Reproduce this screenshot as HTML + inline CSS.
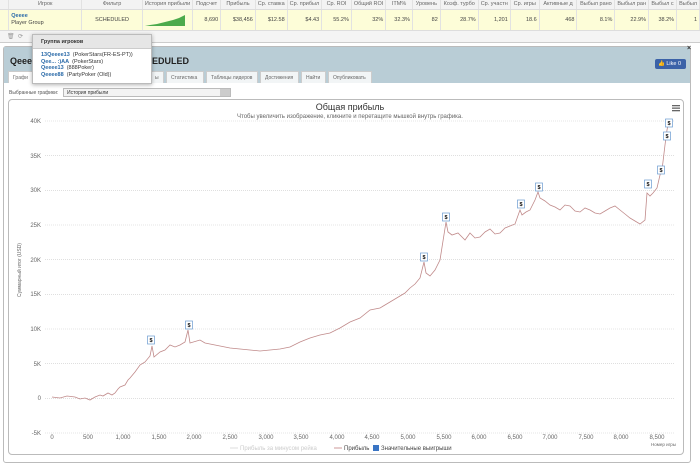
<!DOCTYPE html>
<html><head><meta charset="utf-8"><style>
*{margin:0;padding:0;box-sizing:border-box}
body{width:700px;height:463px;overflow:hidden;background:#fff;font-family:"Liberation Sans","Noto Sans CJK SC",sans-serif;position:relative;font-size:6px;color:#333}
.abs{position:absolute}
table{border-collapse:collapse;position:absolute;left:0;top:0;width:700px}
td{font-size:5.5px;white-space:nowrap;overflow:hidden;border-right:1px solid #e2e2e2;padding:0 2px}
.h td{height:9px;background:#f3f3f3;color:#666;text-align:center;border-bottom:1px solid #ddd}
.r td{height:21px;background:#fdfdd8;text-align:right;color:#444;border-bottom:1px solid #ddd}
.tab{position:absolute;top:71px;height:12px;border:1px solid #ccc;border-bottom:none;background:#f2f5f6;font-size:5px;color:#666;padding:3px 4px 0}
</style></head><body>
<table>
<tr class="h"><td style="width:9px"></td><td style="width:75px">Игрок</td><td style="width:62px">Фильтр</td><td style="width:45px">История прибыли</td><td style="width:28px">Подсчет</td><td style="width:35px">Прибыль</td><td style="width:31px">Ср. ставка</td><td style="width:32px">Ср. прибыл</td><td style="width:30px">Ср. ROI</td><td style="width:31px">Общий ROI</td><td style="width:27px">ITM%</td><td style="width:28px">Уровень</td><td style="width:38px">Коэф. турбо</td><td style="width:31px">Ср. участн</td><td style="width:29px">Ср. игры</td><td style="width:38px">Активные д</td><td style="width:38px">Выбыл рано</td><td style="width:32px">Выбыл ран</td><td style="width:28px">Выбыл с</td><td>Выбыл</td></tr>
<tr class="r"><td></td><td style="text-align:left;line-height:7px"><b style="color:#2a6aa8">Qeeee</b><br>Player Group</td><td style="text-align:center">SCHEDULED</td><td><svg width="40" height="12" style="display:block"><path d="M0 12 L5 11 L12 10 L20 8 L28 6 L34 4 L40 1 L40 12Z" fill="#4caa4c"/></svg></td><td>8,690</td><td>$38,456</td><td>$12.58</td><td>$4.43</td><td>55.2%</td><td>32%</td><td>32.3%</td><td>82</td><td>28.7%</td><td>1,201</td><td>18.6</td><td>468</td><td>8.1%</td><td>22.9%</td><td>38.2%</td><td>1</td></tr>
</table>
<div class="abs" style="left:0;top:31px;width:700px;height:12px;background:#f4f4f4;border-bottom:1px solid #ccc;font-size:6px;color:#999;padding:2px 0 0 7px">🗑 &nbsp;⟳ <span style="margin-left:112px">ы ▾</span></div>
<div class="abs" style="left:3px;top:46px;width:688px;height:417px;border:1px solid #bbb;background:#fff;border-radius:3px"></div>
<div class="abs" style="left:4px;top:47px;width:686px;height:36px;background:#b9cdd6"></div>
<div class="abs" style="left:10px;top:56px;font-size:9px;font-weight:bold;color:#222">Qeeee<span style="margin-left:115px">EDULED</span></div>
<div class="abs" style="left:655px;top:59px;width:31px;height:10px;background:#3b62a8;border-radius:2px;color:#fff;font-size:5.5px;padding:2px 3px">👍 Like 0</div>
<div class="abs" style="left:687px;top:45px;font-size:7px;font-weight:bold">×</div>
<div class="tab" style="left:8px;width:28px;background:#fff">Графи</div>
<div class="tab" style="left:150px;width:14px">ы</div>
<div class="tab" style="left:166px;width:38px">Статистика</div>
<div class="tab" style="left:206px;width:52px">Таблицы лидеров</div>
<div class="tab" style="left:260px;width:39px">Достижения</div>
<div class="tab" style="left:301px;width:25px">Найти</div>
<div class="tab" style="left:328px;width:44px">Опубликовать</div>
<div class="abs" style="left:9px;top:90px;font-size:5px;color:#555">Выбранные графики:</div>
<div class="abs" style="left:63px;top:88px;width:168px;height:9px;border:1px solid #bbb;background:#f3f3f3;font-size:5px;padding:1px 3px">История прибыли<span style="position:absolute;right:0;top:0;width:10px;height:7px;background:#ccc"></span></div>
<div class="abs" style="left:8px;top:99px;width:676px;height:356px;border:1px solid #bbb;border-radius:4px"></div>
<div class="abs" style="left:32px;top:34px;width:120px;height:50px;background:#fff;border:1px solid #bbb;box-shadow:0 1px 4px rgba(0,0,0,.3)">
<div style="height:14px;background:#e6e6e6;font-size:5.5px;font-weight:bold;padding:4px 8px;border-bottom:1px solid #ccc">Группа игроков</div>
<div style="font-size:5.5px;line-height:6.5px;padding:3px 8px;color:#333"><b style="color:#2a6aa8">13Qeeee13</b> &nbsp;(PokerStars(FR-ES-PT))<br><b style="color:#2a6aa8">Qee... :)AA</b> &nbsp;(PokerStars)<br><b style="color:#2a6aa8">Qeeee13</b> &nbsp;(888Poker)<br><b style="color:#2a6aa8">Qeeee88</b> &nbsp;(PartyPoker (Old))</div></div>
<svg class="abs" style="left:0;top:0" width="700" height="463" font-family="Liberation Sans,sans-serif">
<text x="350" y="110" font-size="9" fill="#333" text-anchor="middle">Общая прибыль</text>
<text x="350" y="118" font-size="6" fill="#666" text-anchor="middle">Чтобы увеличить изображение, кликните и перетащите мышкой внутрь графика.</text>
<g fill="#666"><rect x="672" y="105" width="8" height="1.3"/><rect x="672" y="107.5" width="8" height="1.3"/><rect x="672" y="110" width="8" height="1.3"/></g>
<g stroke="#ccc" stroke-dasharray="1,1" stroke-width="0.6">
<line x1="45" x2="675" y1="121" y2="121"/><line x1="45" x2="675" y1="155.7" y2="155.7"/><line x1="45" x2="675" y1="190.3" y2="190.3"/><line x1="45" x2="675" y1="225" y2="225"/><line x1="45" x2="675" y1="259.7" y2="259.7"/><line x1="45" x2="675" y1="294.3" y2="294.3"/><line x1="45" x2="675" y1="329" y2="329"/><line x1="45" x2="675" y1="363.7" y2="363.7"/><line x1="45" x2="675" y1="398.3" y2="398.3"/><line x1="45" x2="675" y1="433" y2="433"/></g>
<g font-size="6" fill="#666" text-anchor="end">
<text x="41" y="123">40K</text><text x="41" y="158">35K</text><text x="41" y="192">30K</text><text x="41" y="227">25K</text><text x="41" y="262">20K</text><text x="41" y="296">15K</text><text x="41" y="331">10K</text><text x="41" y="366">5K</text><text x="41" y="400">0</text><text x="41" y="435">-5K</text></g>
<text x="21" y="270" font-size="5" fill="#666" transform="rotate(-90 21 270)" text-anchor="middle">Суммарный итог (USD)</text>
<g font-size="6" fill="#666" text-anchor="middle">
<text x="52" y="439">0</text><text x="88" y="439">500</text><text x="123" y="439">1,000</text><text x="159" y="439">1,500</text><text x="194" y="439">2,000</text><text x="230" y="439">2,500</text><text x="266" y="439">3,000</text><text x="301" y="439">3,500</text><text x="337" y="439">4,000</text><text x="372" y="439">4,500</text><text x="408" y="439">5,000</text><text x="444" y="439">5,500</text><text x="479" y="439">6,000</text><text x="515" y="439">6,500</text><text x="550" y="439">7,000</text><text x="586" y="439">7,500</text><text x="621" y="439">8,000</text><text x="657" y="439">8,500</text></g>
<text x="676" y="446" font-size="4.5" fill="#666" text-anchor="end">Номер игры</text>
<g font-size="6"><line x1="230" x2="238" y1="448" y2="448" stroke="#ddd"/><text x="240" y="450" fill="#ccc">Прибыль за минусом рейка</text>
<line x1="334" x2="342" y1="448" y2="448" stroke="#c99"/><text x="344" y="450" fill="#444">Прибыль</text>
<rect x="373" y="445" width="6" height="6" fill="#3a75c4"/><text x="381" y="450" fill="#444">Значительные выигрыши</text></g>
<polyline fill="none" stroke="#c08a8a" stroke-width="0.8" points="52,397 60,398 67,396 75,397 80,399 85,398 90,400 95,397 100,395 103,396 108,393 112,395 115,393 118,389 120,387 125,385 128,380 130,378 135,372 140,365 145,362 150,356 152,346 154,357 160,352 165,350 170,345 175,347 180,345 185,342 188,330 190,343 200,340 205,343 210,344 220,346 230,348 240,349 250,350 260,351 270,350 280,349 290,347 300,342 310,338 320,335 330,333 340,328 350,322 360,318 370,310 380,308 390,302 400,296 405,293 410,288 415,284 420,278 424,262 426,273 430,276 435,270 440,260 446,222 448,232 452,235 458,233 465,240 470,233 475,238 480,237 485,232 490,229 495,234 500,233 505,228 510,226 515,224 520,210 522,215 526,212 530,210 535,200 538,192 540,198 545,201 550,205 555,207 560,210 565,205 570,206 575,211 580,212 585,208 590,210 595,213 600,214 605,211 610,208 615,206 620,210 625,214 630,218 635,221 640,224 645,220 647,193 650,196 653,193 657,188 660,175 662,170 665,145 667,130 668,125"/>
<g font-size="5.5" font-weight="bold" text-anchor="middle" fill="#111">
<g transform="translate(151,345)"><rect x="-3.5" y="-9" width="7" height="8" fill="#fff" stroke="#6a9ad0" stroke-width="0.7"/><text y="-3">$</text></g>
<g transform="translate(189,330)"><rect x="-3.5" y="-9" width="7" height="8" fill="#fff" stroke="#6a9ad0" stroke-width="0.7"/><text y="-3">$</text></g>
<g transform="translate(424,262)"><rect x="-3.5" y="-9" width="7" height="8" fill="#fff" stroke="#6a9ad0" stroke-width="0.7"/><text y="-3">$</text></g>
<g transform="translate(446,222)"><rect x="-3.5" y="-9" width="7" height="8" fill="#fff" stroke="#6a9ad0" stroke-width="0.7"/><text y="-3">$</text></g>
<g transform="translate(521,209)"><rect x="-3.5" y="-9" width="7" height="8" fill="#fff" stroke="#6a9ad0" stroke-width="0.7"/><text y="-3">$</text></g>
<g transform="translate(539,192)"><rect x="-3.5" y="-9" width="7" height="8" fill="#fff" stroke="#6a9ad0" stroke-width="0.7"/><text y="-3">$</text></g>
<g transform="translate(648,189)"><rect x="-3.5" y="-9" width="7" height="8" fill="#fff" stroke="#6a9ad0" stroke-width="0.7"/><text y="-3">$</text></g>
<g transform="translate(661,175)"><rect x="-3.5" y="-9" width="7" height="8" fill="#fff" stroke="#6a9ad0" stroke-width="0.7"/><text y="-3">$</text></g>
<g transform="translate(667,141)"><rect x="-3.5" y="-9" width="7" height="8" fill="#fff" stroke="#6a9ad0" stroke-width="0.7"/><text y="-3">$</text></g>
<g transform="translate(669,128)"><rect x="-3.5" y="-9" width="7" height="8" fill="#fff" stroke="#6a9ad0" stroke-width="0.7"/><text y="-3">$</text></g>
</g>
</svg>
</body></html>
